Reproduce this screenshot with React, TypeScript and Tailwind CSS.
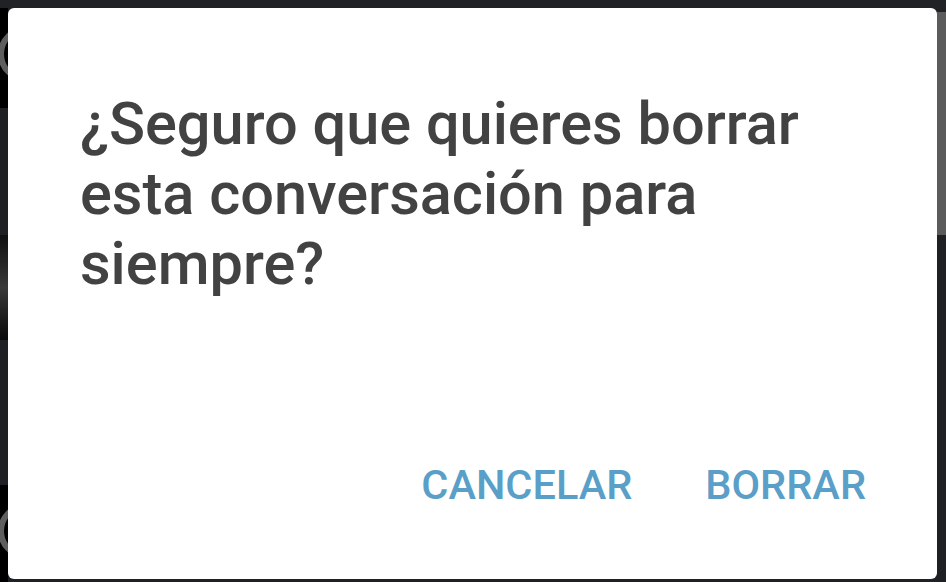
import React from "react";

export default function App() {
  return (
    <div className="relative w-[946px] h-[582px] overflow-hidden bg-[#1f2124] flex flex-col" style={{ fontFamily: "Roboto, 'Noto Sans', sans-serif" }}>
      <div className="h-[8px] bg-[#202225] shrink-0" />
      <div className="flex flex-1">
        <div className="w-[8px] flex flex-col">
          <div className="h-[100px] bg-black relative overflow-hidden">
            <div className="absolute left-[-2px] top-[18px] w-[56px] h-[56px] rounded-full border-[6px] border-[#5e5e5e]" />
          </div>
          <div className="h-[127px] bg-[#1e2023]" />
          <div className="h-[105px] bg-gradient-to-b from-[#101010] via-[#3a3a3a] to-[#0a0a0a]" />
          <div className="h-[145px] bg-[#1e2023]" />
          <div className="flex-1 bg-black relative overflow-hidden">
            <div className="absolute left-[-2px] top-[18px] w-[56px] h-[56px] rounded-full border-[6px] border-[#5e5e5e]" />
          </div>
        </div>
        <div className="flex-1" />
        <div className="w-[9px] flex flex-col">
          <div className="h-[4px] bg-[#1f2124]" />
          <div className="h-[223px] bg-[#5b5b5b]" />
          <div className="flex-1 bg-[#1e2023]" />
        </div>
      </div>

      <div className="absolute left-[8px] top-[8px] w-[929px] h-[571px] bg-white rounded-[6px] flex flex-col justify-between">
        <div className="pt-[81px] pl-[72px] pr-[40px] text-[59.5px] leading-[70px] font-medium text-[#424242]">
          ¿Seguro que quieres borrar<br />esta conversación para<br />siempre?
        </div>
        <div className="flex justify-end gap-[73px] pr-[71px] pb-[73px] text-[41.5px] leading-[42px] font-medium text-[#5a9fc8]">
          <span>CANCELAR</span>
          <span>BORRAR</span>
        </div>
      </div>
    </div>
  );
}
